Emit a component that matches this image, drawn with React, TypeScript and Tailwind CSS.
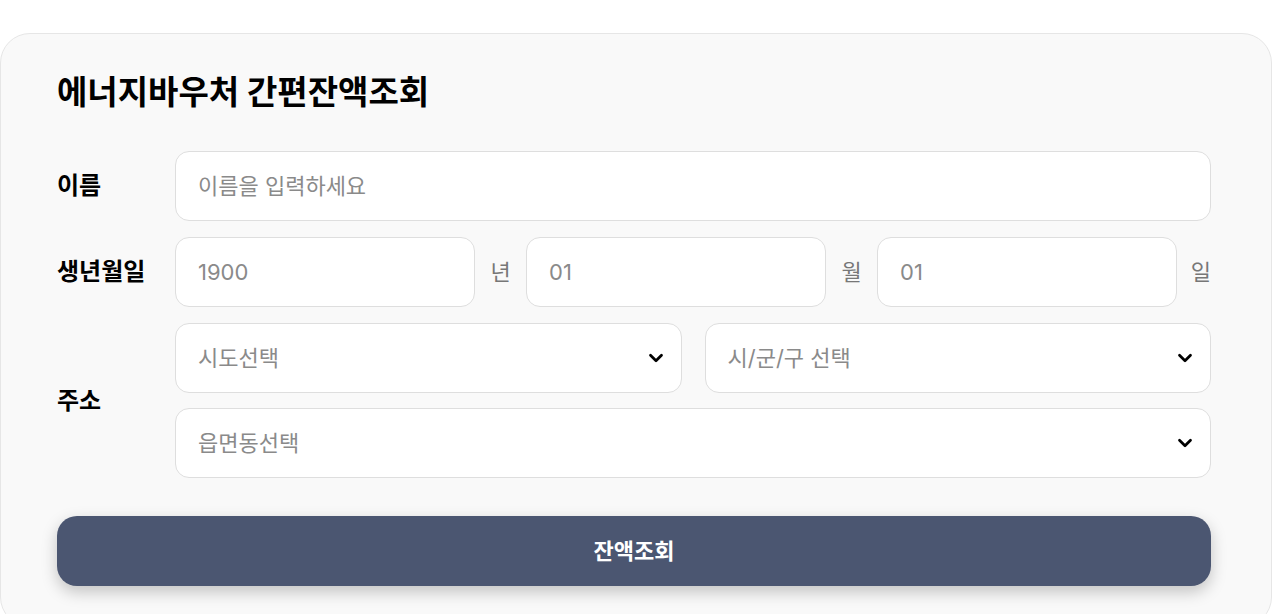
import React from "react";
import { ChevronDown } from "lucide-react";

const field =
    "h-[70px] rounded-[14px] border border-[#dedede] bg-white px-[22px] text-[22px] text-[#8a8a8a] flex items-center";

const Select: React.FC<{ label: string; className?: string }> = ({ label, className }) => (
    <div className={`${field} justify-between pr-[14px] ${className ?? ""}`}>
        <span>{label}</span>
        <ChevronDown size={22} strokeWidth={3} className="text-black" />
    </div>
);

const App: React.FC = () => {
    return (
        <div className="min-h-screen bg-white pt-[33px] font-['Inter','Noto_Sans_CJK_KR',sans-serif]">
            <div className="w-[1272px] rounded-[30px] border border-[#e6e6e6] bg-[#f9f9f9] pl-[56px] pr-[60px] pt-[34px] pb-[40px]">
                <h1 className="text-[33px] font-bold text-black leading-[48px]">
                    에너지바우처 간편잔액조회
                </h1>

                <div className="mt-[35px] flex flex-col gap-[16px]">
                    <div className="flex items-center">
                        <div className="w-[118px] text-[24px] font-bold">이름</div>
                        <div className={`${field} flex-1`}>이름을 입력하세요</div>
                    </div>

                    <div className="flex items-center">
                        <div className="w-[118px] text-[24px] font-bold">생년월일</div>
                        <div className={`${field} w-[300px]`}>1900</div>
                        <span className="w-[51px] text-center text-[22px] text-[#777]">년</span>
                        <div className={`${field} w-[300px]`}>01</div>
                        <span className="w-[51px] text-center text-[22px] text-[#777]">월</span>
                        <div className={`${field} w-[300px]`}>01</div>
                        <span className="flex-1 text-right text-[22px] text-[#777]">일</span>
                    </div>

                    <div className="flex items-center">
                        <div className="w-[118px] text-[24px] font-bold">주소</div>
                        <div className="flex flex-1 flex-col gap-[15px]">
                            <div className="flex gap-[23px]">
                                <Select label="시도선택" className="flex-1" />
                                <Select label="시/군/구 선택" className="flex-1" />
                            </div>
                            <Select label="읍면동선택" />
                        </div>
                    </div>
                </div>

                <button className="mt-[38px] flex h-[70px] w-full items-center justify-center rounded-[20px] bg-[#4b5671] text-[22px] font-bold text-white shadow-[0_6px_16px_rgba(0,0,0,0.22)]">
                    잔액조회
                </button>
            </div>
        </div>
    );
};

export default App;
